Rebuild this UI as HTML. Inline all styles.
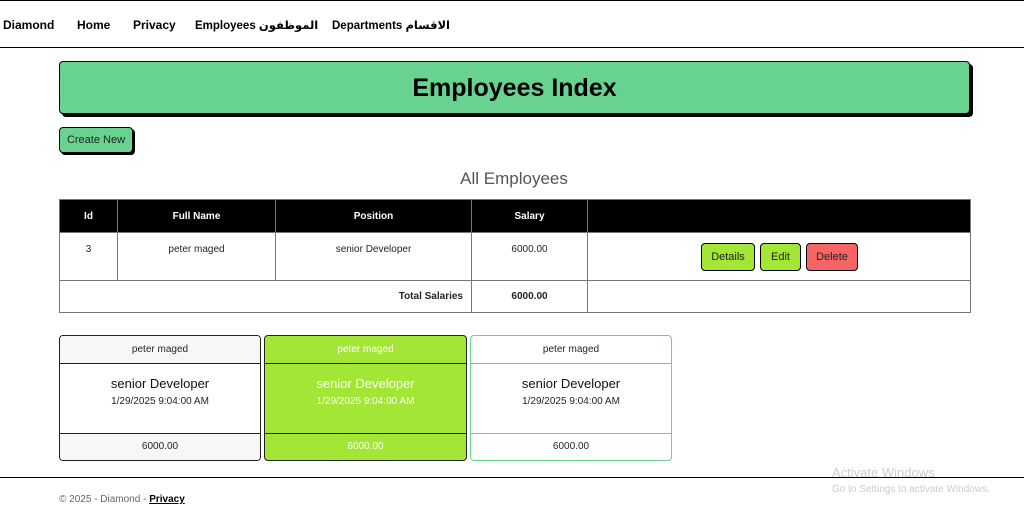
<!DOCTYPE html>
<html><head><meta charset="utf-8"><style>
*{box-sizing:border-box;margin:0;padding:0}
body{width:1024px;height:509px;position:relative;background:#fff;font-family:"Liberation Sans","DejaVu Sans",sans-serif;color:#212529;overflow:hidden}
.a{position:absolute}
.nav{left:0;top:0;width:1024px;height:48px;border-top:1px solid #000;border-bottom:1px solid #000}
.nav span{position:absolute;top:17px;font-size:12px;font-weight:bold;color:#000;white-space:nowrap}
.hdr{left:59px;top:61px;width:911px;height:53px;background:#68d391;border:1px solid #000;border-radius:4px;box-shadow:3px 3px 0 #000;text-align:center;font-size:25px;font-weight:bold;line-height:53px;color:#000}
.btn{border:1px solid #000;border-radius:4px;font-size:11px;text-align:center;color:#222}
table{position:absolute;left:59px;top:199px;width:912px;border-collapse:collapse;font-size:10px}
td,th{border:1px solid #777;text-align:center}
th{background:#000;color:#fff;height:33px;font-weight:bold}
.card{border:1px solid #222;border-radius:4px;overflow:hidden;font-size:10px;text-align:center}
.card .h{height:28px;line-height:28px;border-bottom:1px solid #222}
.card .b{height:70px;border-bottom:1px solid #222;padding-top:12px}
.card .b b{display:block;font-size:13px;font-weight:normal;color:#111}
.card .b i{display:block;font-style:normal;font-size:10px;margin-top:5px}
.card .f{height:26px;line-height:26px}
</style></head><body>
<div class="a nav">
<span style="left:3px">Diamond</span><span style="left:77px">Home</span><span style="left:133px">Privacy</span><span style="left:195px;font-size:11.5px">Employees الموظفون</span><span style="left:332px;font-size:11.5px">Departments الاقسام</span>
</div>
<div class="a hdr">Employees Index</div>
<div class="a btn" style="left:59px;top:127px;width:74px;height:26px;line-height:24px;background:#68d391;box-shadow:2px 2px 0 #000">Create New</div>
<div class="a" style="left:0;width:1028px;top:169px;text-align:center;font-size:17px;color:#555">All Employees</div>
<table>
<tr><th style="width:58px">Id</th><th style="width:158px">Full Name</th><th style="width:196px">Position</th><th style="width:116px">Salary</th><th></th></tr>
<tr style="height:48px"><td style="vertical-align:top;padding-top:11px">3</td><td style="vertical-align:top;padding-top:11px">peter maged</td><td style="vertical-align:top;padding-top:11px">senior Developer</td><td style="vertical-align:top;padding-top:11px">6000.00</td><td></td></tr>
<tr style="height:32px"><td colspan="3" style="text-align:right;padding-right:8px;font-weight:bold">Total Salaries</td><td style="font-weight:bold">6000.00</td><td></td></tr>
</table>
<div class="a btn" style="left:701px;top:243px;width:54px;height:28px;line-height:26px;background:#a3e635">Details</div>
<div class="a btn" style="left:760px;top:243px;width:41px;height:28px;line-height:26px;background:#a3e635">Edit</div>
<div class="a btn" style="left:806px;top:243px;width:52px;height:28px;line-height:26px;background:#f56565">Delete</div>
<div class="a card" style="left:59px;top:335px;width:202px;height:126px">
<div class="h" style="background:#f7f7f7">peter maged</div><div class="b"><b>senior Developer</b><i>1/29/2025 9:04:00 AM</i></div><div class="f" style="background:#f7f7f7">6000.00</div></div>
<div class="a card" style="left:264px;top:335px;width:203px;height:126px;background:#a3e635;color:#fff">
<div class="h">peter maged</div><div class="b"><b style="color:#fff">senior Developer</b><i>1/29/2025 9:04:00 AM</i></div><div class="f">6000.00</div></div>
<div class="a card" style="left:470px;top:335px;width:202px;height:126px;border-color:#68d391">
<div class="h" style="border-color:#68d391">peter maged</div><div class="b" style="border-color:#68d391"><b>senior Developer</b><i>1/29/2025 9:04:00 AM</i></div><div class="f">6000.00</div></div>
<div class="a" style="left:0;top:477px;width:1024px;border-top:1px solid #000"></div>
<div class="a" style="left:59px;top:494px;font-size:10px;color:#666">© 2025 - Diamond - <b style="color:#000;text-decoration:underline">Privacy</b></div>
<div class="a" style="left:832px;top:465px;font-size:13px;color:#ccc">Activate Windows</div>
<div class="a" style="left:832px;top:484px;font-size:10px;color:#ccc">Go to Settings to activate Windows.</div>
</body></html>
